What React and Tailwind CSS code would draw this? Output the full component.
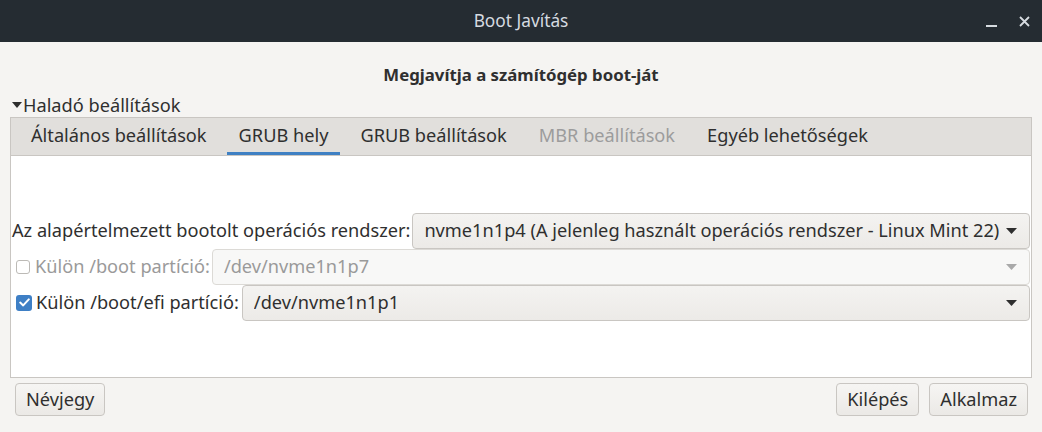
import React from 'react';

const font = { fontFamily: '"Noto Sans", "Open Sans", sans-serif' };

function Arrow({ disabled }) {
  return (
    <svg width="11" height="6" viewBox="0 0 11 6" className="shrink-0">
      <path d="M0 0 L11 0 L5.5 6 Z" fill={disabled ? '#a9a9a9' : '#2e2e2e'} />
    </svg>
  );
}

function Combo({ value, disabled }) {
  return (
    <div
      className={
        'flex-1 min-w-0 h-[36px] flex items-center justify-between pl-[11px] pr-[12px] rounded-[4px] border ' +
        (disabled
          ? 'bg-[#f8f8f7] border-[#dcdad6] text-[#9a9a9a]'
          : 'bg-gradient-to-b from-[#f4f3f1] to-[#eceae7] border-[#c9c6c2] text-[#2f2f2f]')
      }
    >
      <span className="whitespace-nowrap overflow-hidden">{value}</span>
      <Arrow disabled={disabled} />
    </div>
  );
}

function Button({ children }) {
  return (
    <div className="h-[33px] px-[10px] flex items-center rounded-[4px] border border-[#c9c6c2] bg-gradient-to-b from-[#f6f5f3] to-[#ebe9e6] text-[#2f2f2f]">
      {children}
    </div>
  );
}

export default function App() {
  const tabs = [
    { label: 'Általános beállítások' },
    { label: 'GRUB hely', active: true },
    { label: 'GRUB beállítások' },
    { label: 'MBR beállítások', disabled: true },
    { label: 'Egyéb lehetőségek' },
  ];

  return (
    <div className="w-[1042px] h-[432px] bg-[#f5f4f2] text-[18.2px] text-[#2f2f2f] flex flex-col overflow-hidden" style={font}>
      {/* title bar */}
      <div className="h-[42px] shrink-0 bg-[#252c32] flex items-center relative">
        <div className="flex-1 text-center text-[17.3px] text-[#d6dbe0]">Boot Javítás</div>
        <div className="absolute right-[12px] top-0 h-full flex items-center gap-[22px]">
          <div className="w-[11px] h-[2px] bg-[#d6dbe0] mt-[10px]" />
          <svg width="11" height="11" viewBox="0 0 11 11">
            <path d="M1 1 L10 10 M10 1 L1 10" stroke="#d6dbe0" strokeWidth="1.8" />
          </svg>
        </div>
      </div>

      <div className="flex-1 flex flex-col px-[10px]">
        <div className="pt-[20px] h-[44px] leading-[26px] text-center font-bold text-[16.8px]">
          Megjavítja a számítógép boot-ját
        </div>

        <div className="mt-[8px] h-[22px] leading-[22px] flex items-center pl-[2px]">
          <svg width="10" height="6" viewBox="0 0 10 6" className="mr-[1px]">
            <path d="M0 0 L10 0 L5 6 Z" fill="#2e2e2e" />
          </svg>
          <span>Haladó beállítások</span>
        </div>

        {/* notebook */}
        <div className="mt-[1px] h-[261px] border border-[#c9c6c2] flex flex-col">
          <div className="h-[38px] shrink-0 bg-[#e1dfdc] border-b border-[#c9c6c2] flex pl-[8px] gap-[8px]">
            {tabs.map((t) => (
              <div
                key={t.label}
                className={
                  'px-[12px] flex items-center border-b-[3px] ' +
                  (t.active ? 'border-[#3f80c3]' : 'border-transparent') +
                  (t.disabled ? ' text-[#9c9c9c]' : ' text-[#2f2f2f]')
                }
              >
                <span className="whitespace-nowrap pt-[2px]">{t.label}</span>
              </div>
            ))}
          </div>

          <div className="flex-1 bg-white flex flex-col justify-center px-[1px] gap-[1px]">
            <div className="flex items-center">
              <span className="whitespace-nowrap pr-[2px]">Az alapértelmezett bootolt operációs rendszer:</span>
              <Combo value="nvme1n1p4 (A jelenleg használt operációs rendszer - Linux Mint 22)" />
            </div>
            <div className="flex items-center -mt-[1px]">
              <div className="w-[14px] h-[14px] ml-[4px] mr-[5px] rounded-[3px] border border-[#bcbab6] bg-white shrink-0" />
              <span className="whitespace-nowrap text-[#9a9a9a] pr-[2px]">Külön /boot partíció:</span>
              <Combo value="/dev/nvme1n1p7" disabled />
            </div>
            <div className="flex items-center -mt-[1px]">
              <div className="w-[16px] h-[16px] ml-[4px] mr-[4px] rounded-[3px] bg-[#3e7fc5] flex items-center justify-center shrink-0">
                <svg width="11" height="9" viewBox="0 0 11 9">
                  <path d="M1.2 4.6 L4.2 7.4 L9.8 1.4" stroke="white" strokeWidth="2" fill="none" strokeLinecap="round" strokeLinejoin="round" />
                </svg>
              </div>
              <span className="whitespace-nowrap pr-[3px]">Külön /boot/efi partíció:</span>
              <Combo value="/dev/nvme1n1p1" />
            </div>
          </div>
        </div>

        {/* buttons */}
        <div className="mt-[5px] flex items-center pl-[5px] pr-[4px]">
          <Button>Névjegy</Button>
          <div className="flex-1" />
          <div className="flex gap-[10px]">
            <Button>Kilépés</Button>
            <Button>Alkalmaz</Button>
          </div>
        </div>
      </div>
    </div>
  );
}
